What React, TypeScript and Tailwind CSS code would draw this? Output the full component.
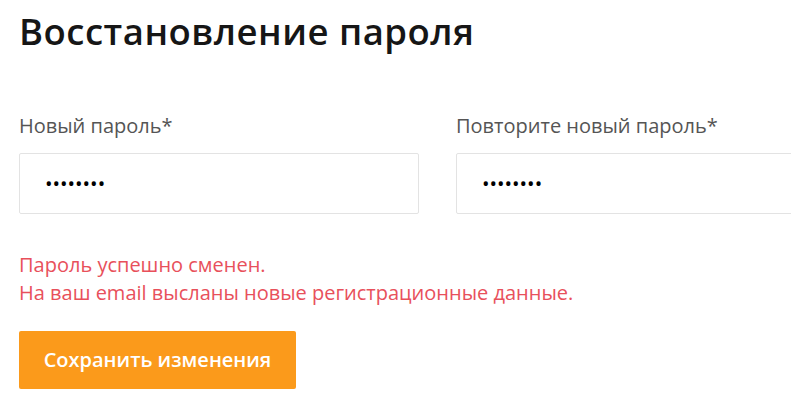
import { useState } from "react";

function PasswordField({ label }: { label: string }) {
  const [value, setValue] = useState("qwerty12");

  return (
    <label className="flex w-[400px] shrink-0 flex-col">
      <span className="text-[20px] leading-[28px] text-[#555]">{label}</span>
      <input
        type="password"
        value={value}
        onChange={(e) => setValue(e.target.value)}
        className="mt-[13px] h-[61px] rounded-[2px] border border-[#e3e3e3] bg-white px-[25px] text-[20px] text-black outline-none"
      />
    </label>
  );
}

export default function App() {
  return (
    <div className="min-h-[411px] w-[791px] overflow-hidden bg-white pl-[19px] font-['Open_Sans',sans-serif]">
      <h1 className="pt-[5px] text-[36.5px] font-semibold leading-[52px] tracking-[0.5px] text-[#161616]">
        Восстановление пароля
      </h1>

      <div className="mt-[55px] flex gap-[37px]">
        <PasswordField label="Новый пароль*" />
        <PasswordField label="Повторите новый пароль*" />
      </div>

      <div className="mt-[37px] text-[20px] leading-[28px] text-[#e8505b]">
        <p>Пароль успешно сменен.</p>
        <p>На ваш email высланы новые регистрационные данные.</p>
      </div>

      <button
        type="button"
        className="mt-[24px] h-[58px] w-[277px] rounded-[2px] bg-[#fb9a1b] text-[20px] font-semibold text-white"
      >
        Сохранить изменения
      </button>
    </div>
  );
}
